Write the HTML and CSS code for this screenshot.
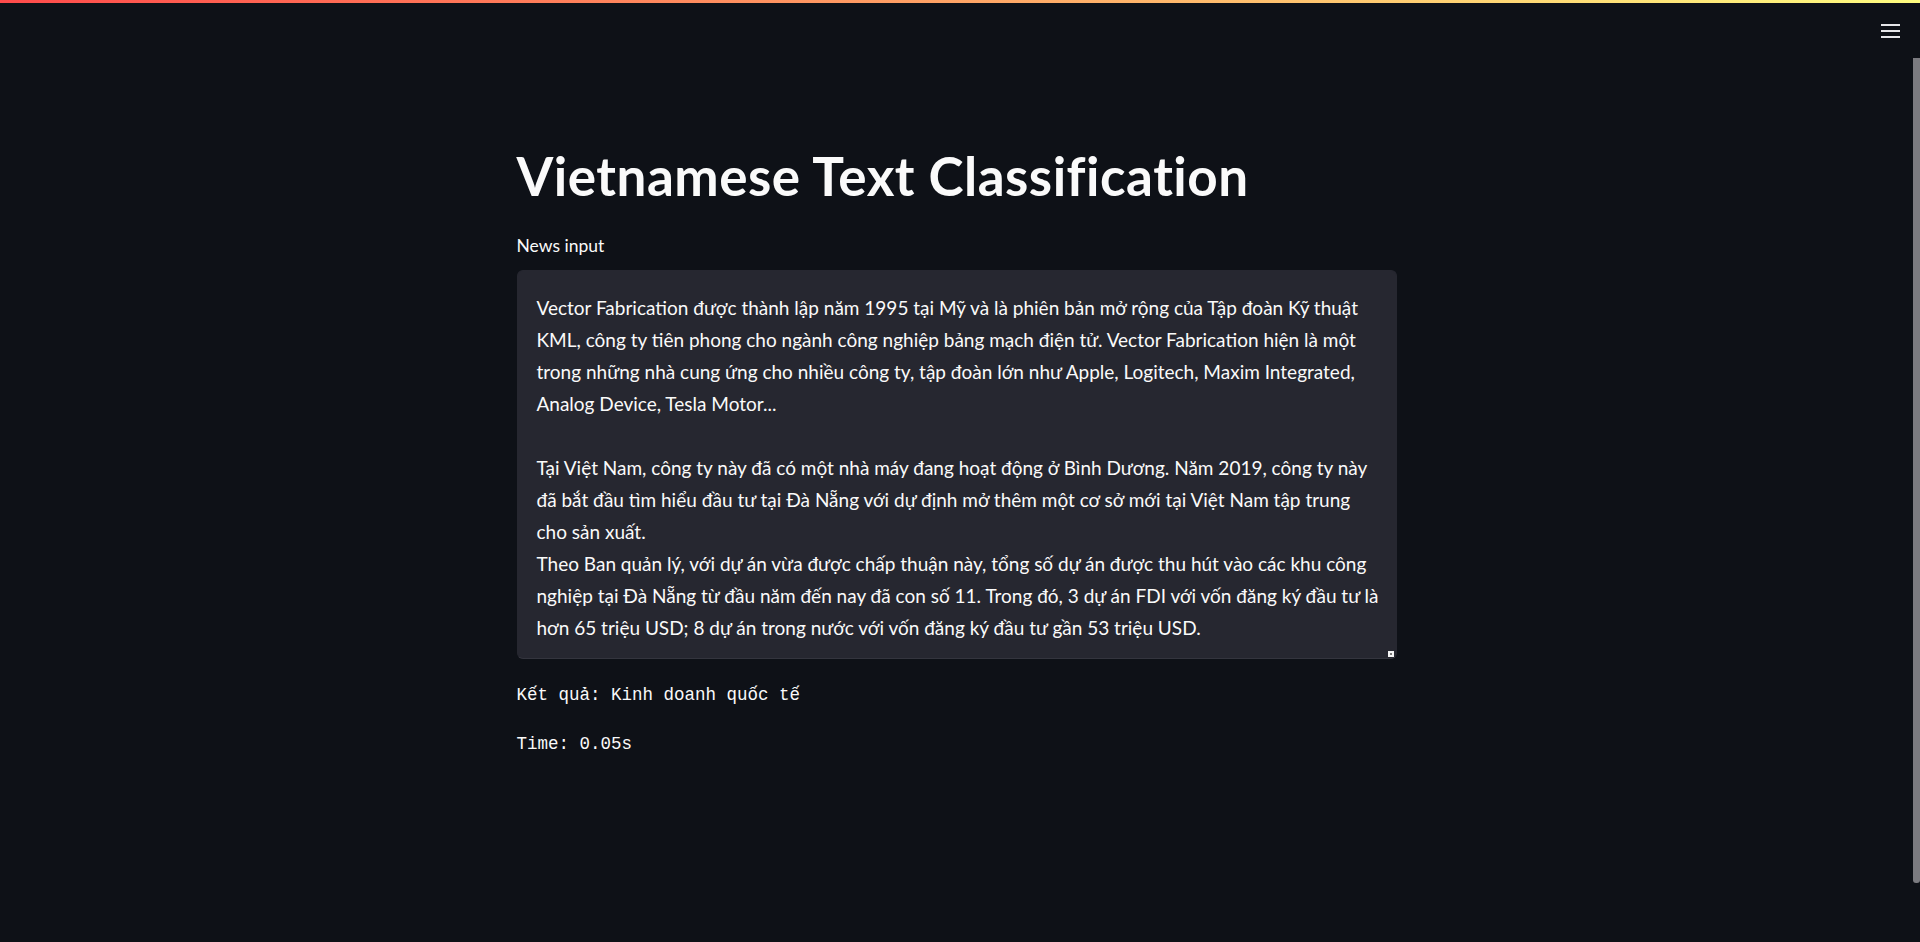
FILE: index.html
```html
<!DOCTYPE html>
<html lang="vi">
<head>
<meta charset="utf-8">
<title>Vietnamese Text Classification</title>
<link rel="stylesheet" href="styles.css">
</head>
<body>
<div class="decoration"></div>
<div class="app">
  <main class="main">
    <header class="toolbar">
      <button class="menu-btn" aria-label="Menu">
        <svg width="20" height="14" viewBox="0 0 20 14"><rect x="0" y="0" width="19" height="2" fill="#e6e6e9"/><rect x="0" y="6" width="19" height="2" fill="#e6e6e9"/><rect x="0" y="12" width="19" height="2" fill="#e6e6e9"/></svg>
      </button>
    </header>
    <div class="block">
      <h1 class="title">Vietnamese Text Classification</h1>
      <label class="label">News input</label>
      <div class="textarea">
        <div class="line">Vector Fabrication được thành lập năm 1995 tại Mỹ và là phiên bản mở rộng của Tập đoàn Kỹ thuật</div>
        <div class="line">KML, công ty tiên phong cho ngành công nghiệp bảng mạch điện tử. Vector Fabrication hiện là một</div>
        <div class="line">trong những nhà cung ứng cho nhiều công ty, tập đoàn lớn như Apple, Logitech, Maxim Integrated,</div>
        <div class="line">Analog Device, Tesla Motor...</div>
        <div class="line">&nbsp;</div>
        <div class="line">Tại Việt Nam, công ty này đã có một nhà máy đang hoạt động ở Bình Dương. Năm 2019, công ty này</div>
        <div class="line">đã bắt đầu tìm hiểu đầu tư tại Đà Nẵng với dự định mở thêm một cơ sở mới tại Việt Nam tập trung</div>
        <div class="line">cho sản xuất.</div>
        <div class="line">Theo Ban quản lý, với dự án vừa được chấp thuận này, tổng số dự án được thu hút vào các khu công</div>
        <div class="line">nghiệp tại Đà Nẵng từ đầu năm đến nay đã con số 11. Trong đó, 3 dự án FDI với vốn đăng ký đầu tư là</div>
        <div class="line">hơn 65 triệu USD; 8 dự án trong nước với vốn đăng ký đầu tư gần 53 triệu USD.</div>
        <span class="resize"></span>
      </div>
      <div class="mono first">Kết quả: Kinh doanh quốc tế</div>
      <div class="mono">Time: 0.05s</div>
    </div>
  </main>
  <div class="scroll-track"><div class="scroll-thumb"></div></div>
</div>
</body>
</html>
```

FILE: styles.css
```css
html, body {
  margin: 0;
  padding: 0;
  height: 100%;
  overflow: hidden;
  background: #0e1117;
  color: #fafafa;
  font-family: Lato, "Noto Sans", sans-serif;
}
.decoration {
  height: 3px;
  background: linear-gradient(90deg, #ff4b4b, #fffd80);
}
.app {
  display: flex;
  height: calc(100% - 3px);
}
.main {
  flex: 1;
  display: flex;
  flex-direction: column;
  align-items: center;
}
.toolbar {
  align-self: stretch;
  display: flex;
  justify-content: flex-end;
  padding: 16px 5px 0 0;
  height: 40px;
  box-sizing: border-box;
}
.menu-btn {
  background: none;
  border: 0;
  padding: 3px 7px;
  margin: 0;
  line-height: 0;
  cursor: pointer;
}
.block {
  width: 880px;
  display: flex;
  flex-direction: column;
}
.title {
  margin: 100px 0 0 0;
  font-size: 53px;
  font-weight: 700;
  letter-spacing: 0.5px;
  line-height: 66px;
  height: 66px;
  white-space: nowrap;
}
.label {
  margin-top: 23px;
  font-size: 17.5px;
  line-height: 28px;
}
.textarea {
  position: relative;
  margin-top: 10px;
  height: 389px;
  box-sizing: border-box;
  background: #262730;
  border: 1px solid #262730;
  border-bottom-color: #34353e;
  border-radius: 6px;
  padding: 21px 19px 0;
  overflow: hidden;
  font-size: 19px;
  line-height: 32px;
}
.line {
  white-space: nowrap;
  height: 32px;
}
.resize {
  position: absolute;
  right: 2px;
  bottom: 1px;
  width: 6px;
  height: 6px;
  background: #f4f4f4;
}
.resize::after {
  content: "";
  position: absolute;
  left: 2px;
  top: 2px;
  width: 2px;
  height: 2px;
  background: #777;
}
.mono {
  font-family: "Liberation Mono", "DejaVu Sans Mono", monospace;
  font-size: 17.5px;
  line-height: 28px;
  margin-top: 21px;
  white-space: pre;
}
.mono.first {
  margin-top: 22px;
}
.scroll-track {
  width: 7px;
  flex: none;
}
.scroll-thumb {
  margin-top: 55px;
  height: 825px;
  background: #7b7b80;
  border-radius: 0 0 3px 3px;
}
```
